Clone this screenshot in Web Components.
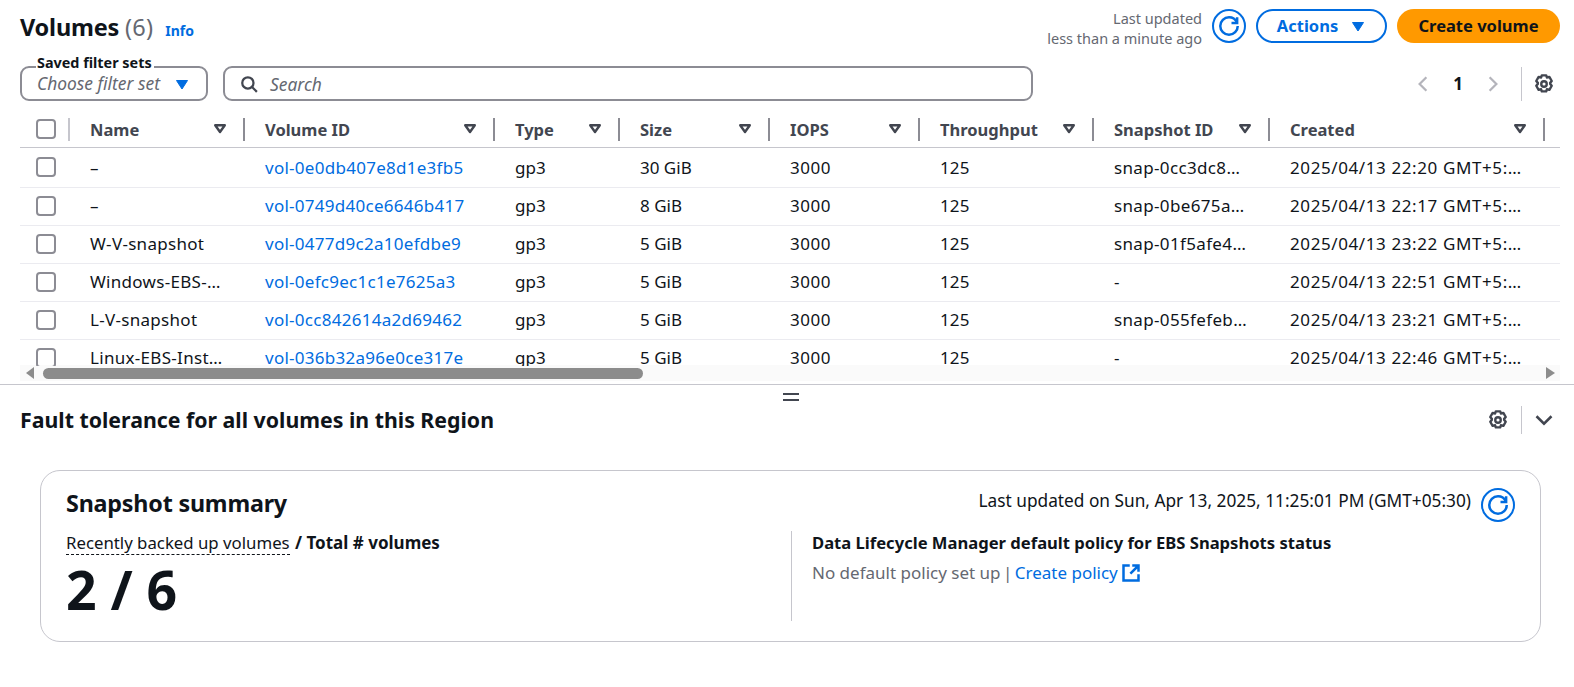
<!DOCTYPE html>
<html>
<head>
<meta charset="utf-8">
<title>Volumes</title>
<style>
  html, body { margin: 0; height: 100%; background: #fff; overflow: hidden; }
  body { font-family: "Noto Sans", "Open Sans", sans-serif; font-size: 17px; color: #0f141a; }
</style>
</head>
<body>
<volumes-page></volumes-page>
<script>
const icons = {
  refresh: '<svg viewBox="0 0 16 16" fill="none" stroke="currentColor" stroke-width="2"><path d="M15 8c0 3.87-3.13 7-7 7s-7-3.13-7-7 3.13-7 7-7c2.79 0 5.2 1.63 6.33 4"/><path d="M14.5 1v4.5H10"/></svg>',
  caret: '<svg viewBox="0 0 16 16" fill="currentColor" stroke="currentColor" stroke-width="1" stroke-linejoin="round"><path d="M2.500 3.500h11L8 12z"/></svg>',
  sort: '<svg viewBox="0 0 16 16" fill="none" stroke="currentColor" stroke-width="2.4" stroke-linejoin="round"><path d="M3.200 4.200h9.600L8 11z"/></svg>',
  search: '<svg viewBox="0 0 16 16" fill="none" stroke="currentColor" stroke-width="2"><circle cx="7" cy="7" r="5"/><path d="m10.500 10.500 4.500 4.500"/></svg>',
  left: '<svg viewBox="0 0 16 16" fill="none" stroke="currentColor" stroke-width="2"><path d="M11 2 5 8l6 6"/></svg>',
  right: '<svg viewBox="0 0 16 16" fill="none" stroke="currentColor" stroke-width="2"><path d="m5 2 6 6-6 6"/></svg>',
  down: '<svg viewBox="0 0 16 16" fill="none" stroke="currentColor" stroke-width="2"><path d="m2 5 6 6 6-6"/></svg>',
  gear: '<svg viewBox="0 0 16 16" fill="none" stroke="currentColor" stroke-width="1.900" stroke-linejoin="round"><path d="M6.200 1.100h3.600l.5 1.700 2-.5 1.900 3.300-1.300 1.500.1.400-.1.400 1.300 1.500-1.900 3.300-2-.5-.5 1.700H6.200l-.5-1.700-2 .5-1.900-3.300 1.300-1.500-.1-.4.1-.4-1.300-1.500 1.900-3.300 2 .5z"/><circle cx="8" cy="8" r="2.200"/></svg>',
  external: '<svg viewBox="0 0 16 16" fill="none" stroke="currentColor" stroke-width="2"><path d="M14 9v5H2V2h5M9 2h5v5M14 2 7.500 8.500"/></svg>'
};

class AppIcon extends HTMLElement {
  connectedCallback() {
    if (!this.shadowRoot) {
      const size = this.getAttribute('size') || 16;
      this.attachShadow({ mode: 'open' });
      this.shadowRoot.innerHTML = `
        <style>
          :host { display: inline-flex; flex: none; width: ${size}px; height: ${size}px; }
          svg { width: 100%; height: 100%; display: block; }
        </style>
        ${icons[this.getAttribute('name')]}
      `;
    }
  }
}

class RefreshButton extends HTMLElement {
  connectedCallback() {
    if (!this.shadowRoot) {
      this.attachShadow({ mode: 'open' });
      this.shadowRoot.innerHTML = `
        <style>
          :host { display: inline-flex; flex: none; width: 34px; height: 34px; box-sizing: border-box; border: 2px solid #006ce0; border-radius: 50%; align-items: center; justify-content: center; color: #006ce0; }
        </style>
        <app-icon name="refresh" size="20"></app-icon>
      `;
    }
  }
}

class PageHeader extends HTMLElement {
  connectedCallback() {
    if (!this.shadowRoot) {
      this.attachShadow({ mode: 'open' });
      this.shadowRoot.innerHTML = `
        <style>
          :host { display: flex; justify-content: space-between; align-items: flex-start; height: 66px; padding: 9px 14px 0 20px; box-sizing: border-box; }
          .title { display: flex; align-items: baseline; gap: 12px; }
          h1 { margin: 0; font-size: 23.500px; line-height: 36px; font-weight: 700; letter-spacing: -0.2px; }
          h1 span { font-weight: 400; color: #656871; letter-spacing: 0.2px; }
          .info { font-size: 14px; font-weight: 700; color: #006ce0; }
          .actions { display: flex; align-items: flex-start; gap: 10px; }
          .updated { text-align: right; font-size: 14.500px; line-height: 20px; color: #656871; margin-top: -1px; }
          .btn { height: 34px; box-sizing: border-box; border-radius: 17px; font-weight: 700; font-size: 16.500px; display: flex; align-items: center; }
          .btn span { position: relative; top: -1px; }
          .normal { width: 131px; border: 2px solid #006ce0; color: #006ce0; justify-content: center; gap: 12px; }
          .normal app-icon { position: relative; top: 1px; }
          .primary { width: 163px; background: #ff9900; justify-content: center; color: #0f141a; }
        </style>
        <div class="title">
          <h1>Volumes <span>(6)</span></h1>
          <a class="info">Info</a>
        </div>
        <div class="actions">
          <div class="updated">Last updated<br>less than a minute ago</div>
          <refresh-button></refresh-button>
          <div class="btn normal"><span>Actions</span> <app-icon name="caret"></app-icon></div>
          <div class="btn primary"><span>Create volume</span></div>
        </div>
      `;
    }
  }
}

class FilterBar extends HTMLElement {
  connectedCallback() {
    if (!this.shadowRoot) {
      this.attachShadow({ mode: 'open' });
      this.shadowRoot.innerHTML = `
        <style>
          :host { display: flex; align-items: center; height: 35px; padding: 0 20px; gap: 15px; }
          .box { height: 35px; box-sizing: border-box; border: 2px solid #8c8c94; border-radius: 9px; display: flex; align-items: center; color: #656871; font-style: italic; font-size: 17.400px; }
          .saved { width: 188px; position: relative; padding: 0 16px 0 15px; justify-content: space-between; }
          .saved span { padding-bottom: 2px; }
          .saved label { position: absolute; left: 14px; top: -13px; background: #fff; padding: 0 2px 0 1px; font-size: 14.400px; line-height: 16px; font-weight: 700; font-style: normal; color: #0f141a; }
          .saved app-icon { color: #006ce0; position: relative; top: 1px; }
          .search { width: 810px; padding-left: 15px; gap: 12px; }
          .search app-icon { color: #424650; }
          .pager { margin-left: auto; display: flex; align-items: center; color: #b4b4bb; }
          .pager b { color: #0f141a; width: 52px; text-align: center; }
          .gear { margin-left: 19px; padding-left: 12px; height: 34px; border-left: 1px solid #c6c6cd; color: #424650; display: flex; align-items: center; }
        </style>
        <div class="box saved"><label>Saved filter sets</label><span>Choose filter set</span><app-icon name="caret"></app-icon></div>
        <div class="box search"><app-icon name="search" size="18"></app-icon><span>Search</span></div>
        <div class="pager">
          <app-icon name="left" size="18"></app-icon><b>1</b><app-icon name="right" size="18"></app-icon>
          <div class="gear"><app-icon name="gear" size="20"></app-icon></div>
        </div>
      `;
    }
  }
}

const columns = ['Name', 'Volume ID', 'Type', 'Size', 'IOPS', 'Throughput', 'Snapshot ID', 'Created'];
const spacing = [0.3, 0.27, 0, 0, 0.5, 0.1, 0.35, 0.6];
const rows = [
  ['–', 'vol-0e0db407e8d1e3fb5', 'gp3', '30 GiB', '3000', '125', 'snap-0cc3dc8…', '2025/04/13 22:20 GMT+5:…'],
  ['–', 'vol-0749d40ce6646b417', 'gp3', '8 GiB', '3000', '125', 'snap-0be675a…', '2025/04/13 22:17 GMT+5:…'],
  ['W-V-snapshot', 'vol-0477d9c2a10efdbe9', 'gp3', '5 GiB', '3000', '125', 'snap-01f5afe4…', '2025/04/13 23:22 GMT+5:…'],
  ['Windows-EBS-…', 'vol-0efc9ec1c1e7625a3', 'gp3', '5 GiB', '3000', '125', '-', '2025/04/13 22:51 GMT+5:…'],
  ['L-V-snapshot', 'vol-0cc842614a2d69462', 'gp3', '5 GiB', '3000', '125', 'snap-055fefeb…', '2025/04/13 23:21 GMT+5:…'],
  ['Linux-EBS-Inst…', 'vol-036b32a96e0ce317e', 'gp3', '5 GiB', '3000', '125', '-', '2025/04/13 22:46 GMT+5:…']
];

class VolumeTable extends HTMLElement {
  connectedCallback() {
    if (!this.shadowRoot) {
      const head = columns.map(c => `<div class="th"><span>${c}</span><app-icon name="sort"></app-icon></div>`).join('');
      const body = rows.map(r => `
        <div class="row">
          <div class="check"><i></i></div>
          ${r.map((v, i) => `<div class="td${i === 1 ? ' link' : ''}" style="letter-spacing:${spacing[i]}px">${v}</div>`).join('')}
        </div>`).join('');
      this.attachShadow({ mode: 'open' });
      this.shadowRoot.innerHTML = `
        <style>
          :host { display: block; margin: 0 14px 0 20px; height: 265px; overflow: hidden; }
          .row, .head { display: grid; grid-template-columns: 50px 175px 250px 125px 150px 150px 174px 176px 275px; }
          .head { height: 47px; align-items: center; border-bottom: 1px solid #c6c6cd; box-sizing: border-box; padding-top: 10px; }
          .row { height: 38px; padding-bottom: 2px; border-bottom: 1px solid #ebebf0; box-sizing: border-box; align-items: center; }
          .head + .row { height: 40px; padding-bottom: 1px; }
          .check { padding-left: 16px; display: flex; align-items: center; height: 24px; }
          .head .check { border-right: 2px solid #c6c6cd; height: 23px; box-sizing: border-box; }
          i { display: block; width: 20px; height: 20px; box-sizing: border-box; border: 2px solid #8c8c94; border-radius: 4px; }
          .th { display: flex; align-items: center; justify-content: space-between; height: 23px; padding: 0 15px 0 20px; border-right: 2px solid #8c8c94; font-weight: 700; font-size: 16.500px; color: #424650; }
          .td { padding-left: 20px; white-space: nowrap; }
          .link { color: #006ce0; }
        </style>
        <div class="head"><div class="check"><i></i></div>${head}</div>
        ${body}
      `;
    }
  }
}

class ScrollBar extends HTMLElement {
  connectedCallback() {
    if (!this.shadowRoot) {
      this.attachShadow({ mode: 'open' });
      this.shadowRoot.innerHTML = `
        <style>
          :host { display: flex; align-items: center; height: 16px; margin: -1px 14px 0 20px; background: #fafafa; }
          .arrow-l { width: 0; height: 0; margin-left: 6px; border: 6px solid transparent; border-left: 0; border-right: 8px solid #8c8c8c; }
          .thumb { width: 600px; height: 11px; border-radius: 6px; background: #8c8c8c; margin-left: 9px; }
          .arrow-r { width: 0; height: 0; margin-left: auto; margin-right: 5px; border: 6px solid transparent; border-right: 0; border-left: 9px solid #8c8c8c; }
        </style>
        <div class="arrow-l"></div><div class="thumb"></div><div class="arrow-r"></div>
      `;
    }
  }
}

class SplitPanel extends HTMLElement {
  connectedCallback() {
    if (!this.shadowRoot) {
      this.attachShadow({ mode: 'open' });
      this.shadowRoot.innerHTML = `
        <style>
          :host { display: block; border-top: 1px solid #c6c6cd; margin-top: 3px; position: relative; }
          .handle { position: absolute; left: 783px; top: 8px; width: 16px; height: 8px; border-top: 2px solid #424650; border-bottom: 2px solid #424650; box-sizing: border-box; }
          .bar { display: flex; align-items: center; justify-content: space-between; padding: 20px 20px 0; height: 49px; box-sizing: border-box; }
          h2 { margin: 0; font-size: 21.300px; font-weight: 700; line-height: 28px; }
          .tools { display: flex; align-items: center; color: #424650; }
          .tools div { height: 28px; border-left: 1px solid #c6c6cd; margin-left: 13px; padding-left: 12px; display: flex; align-items: center; }
          .body { padding: 36px 33px 0 40px; }
        </style>
        <div class="handle"></div>
        <div class="bar">
          <h2>Fault tolerance for all volumes in this Region</h2>
          <div class="tools"><app-icon name="gear" size="20"></app-icon><div><app-icon name="down" size="20"></app-icon></div></div>
        </div>
        <div class="body"><slot></slot></div>
      `;
    }
  }
}

class SnapshotCard extends HTMLElement {
  connectedCallback() {
    if (!this.shadowRoot) {
      this.attachShadow({ mode: 'open' });
      this.shadowRoot.innerHTML = `
        <style>
          :host { display: block; height: 172px; box-sizing: border-box; border: 1px solid #c6c6cd; border-radius: 20px; padding: 16px 25px 0; }
          .top { display: flex; justify-content: space-between; align-items: flex-start; height: 44px; }
          h3 { margin: 0; font-size: 23.300px; line-height: 32px; font-weight: 700; letter-spacing: -0.2px; }
          .stamp { display: flex; align-items: flex-start; gap: 10px; height: 32px; font-size: 17.280px; line-height: 28px; }
          .stamp refresh-button { margin-top: 1px; }
          .cols { display: grid; grid-template-columns: 725px 1fr; }
          .left { font-size: 16.800px; }
          .left u { text-decoration: none; border-bottom: 1px dashed #0f141a; }
          .left b { font-size: 17px; margin-left: 1px; }
          .big { font-size: 53.500px; line-height: 60px; font-weight: 700; margin-top: 6px; }
          .right { border-left: 1px solid #c6c6cd; height: 90px; padding-left: 20px; }
          .right b { display: block; line-height: 24px; font-size: 16.600px; }
          .right p { margin: 6px 0 0; color: #656871; display: flex; align-items: center; gap: 3px; }
          .right i { font-style: normal; word-spacing: -2px; }
          .right a { color: #006ce0; }
          .right app-icon { color: #006ce0; }
        </style>
        <div class="top">
          <h3>Snapshot summary</h3>
          <div class="stamp"><span>Last updated on Sun, Apr 13, 2025, 11:25:01 PM (GMT+05:30)</span><refresh-button></refresh-button></div>
        </div>
        <div class="cols">
          <div class="left">
            <div><u>Recently backed up volumes</u> <b>/ Total # volumes</b></div>
            <div class="big">2 / 6</div>
          </div>
          <div class="right">
            <b>Data Lifecycle Manager default policy for EBS Snapshots status</b>
            <p><span>No default policy set up<i> | </i><a>Create policy</a></span><app-icon name="external" size="20"></app-icon></p>
          </div>
        </div>
      `;
    }
  }
}

class VolumesPage extends HTMLElement {
  connectedCallback() {
    if (!this.shadowRoot) {
      this.attachShadow({ mode: 'open' });
      this.shadowRoot.innerHTML = `
        <style>
          :host { display: block; }
        </style>
        <page-header></page-header>
        <filter-bar></filter-bar>
        <volume-table></volume-table>
        <scroll-bar></scroll-bar>
        <split-panel><snapshot-card></snapshot-card></split-panel>
      `;
    }
  }
}

customElements.define('app-icon', AppIcon);
customElements.define('refresh-button', RefreshButton);
customElements.define('page-header', PageHeader);
customElements.define('filter-bar', FilterBar);
customElements.define('volume-table', VolumeTable);
customElements.define('scroll-bar', ScrollBar);
customElements.define('split-panel', SplitPanel);
customElements.define('snapshot-card', SnapshotCard);
customElements.define('volumes-page', VolumesPage);
</script>
</body>
</html>
